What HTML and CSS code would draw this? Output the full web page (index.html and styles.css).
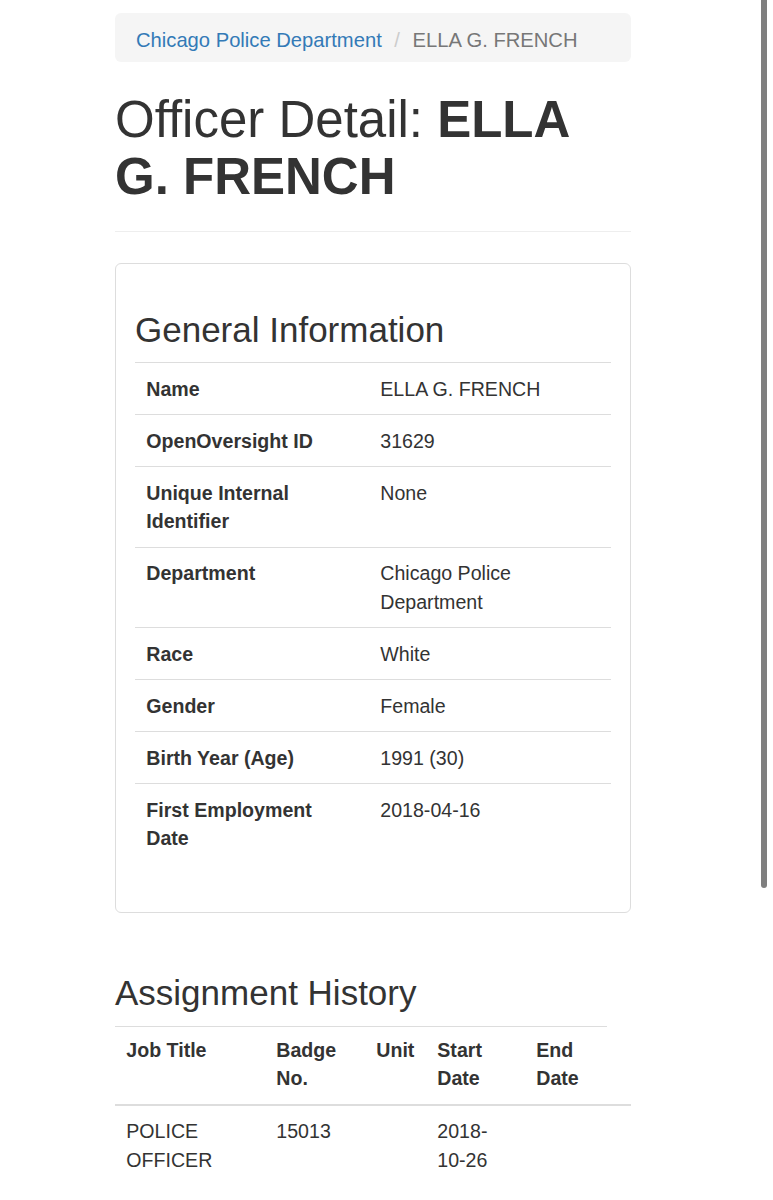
FILE: index.html
```html
<!DOCTYPE html>
<html lang="en">
<head>
<meta charset="utf-8">
<title>Officer Detail: ELLA G. FRENCH</title>
<link rel="stylesheet" href="styles.css">
</head>
<body>
<div class="container">
  <ol class="breadcrumb">
    <li><a href="#">Chicago Police Department</a></li>
    <li class="active">ELLA G. FRENCH</li>
  </ol>

  <div class="page-header">
    <h1>Officer Detail: <b>ELLA</b> <b>G. FRENCH</b></h1>
  </div>

  <div class="card">
    <h3 class="section-title">General Information</h3>
    <table class="info-table">
      <tbody>
        <tr><th>Name</th><td>ELLA G. FRENCH</td></tr>
        <tr><th>OpenOversight ID</th><td>31629</td></tr>
        <tr><th>Unique Internal Identifier</th><td>None</td></tr>
        <tr><th>Department</th><td>Chicago Police Department</td></tr>
        <tr><th>Race</th><td>White</td></tr>
        <tr><th>Gender</th><td>Female</td></tr>
        <tr><th>Birth Year (Age)</th><td>1991 (30)</td></tr>
        <tr><th>First Employment Date</th><td>2018-04-16</td></tr>
      </tbody>
    </table>
  </div>

  <h3 class="section-title history-title">Assignment History</h3>
  <div class="history-rule"></div>
  <table class="history-table">
    <thead>
      <tr>
        <th class="col-job">Job Title</th>
        <th class="col-badge">Badge No.</th>
        <th class="col-unit">Unit</th>
        <th class="col-start">Start Date</th>
        <th class="col-end">End Date</th>
      </tr>
    </thead>
    <tbody>
      <tr>
        <td>POLICE OFFICER</td>
        <td>15013</td>
        <td></td>
        <td>2018-10-26</td>
        <td></td>
      </tr>
    </tbody>
  </table>
</div>
<div class="scrollbar"></div>
</body>
</html>
```
FILE: styles.css
```css
html {
  overflow: hidden;
}

body {
  margin: 0;
  background: #fff;
  color: #333;
  font-family: "Liberation Sans", Arial, Helvetica, sans-serif;
  font-size: 19.6px;
  line-height: 28.4px;
}

.container {
  width: 516px;
  margin-left: 115px;
  padding-top: 13px;
}

/* Breadcrumb */
.breadcrumb {
  margin: 0;
  padding: 12.5px 21px 8.5px;
  list-style: none;
  background: #f5f5f5;
  border-radius: 6px;
  font-size: 20.2px;
}

.breadcrumb li {
  display: inline-block;
}

.breadcrumb li + li::before {
  content: "/\00a0";
  padding: 0 7px;
  color: #ccc;
}

.breadcrumb a {
  color: #337ab7;
  text-decoration: none;
}

.breadcrumb .active {
  color: #777;
}

/* Page header */
.page-header {
  margin-top: 28.5px;
  padding-bottom: 26px;
  border-bottom: 1px solid #eee;
}

.page-header h1 {
  margin: 0;
  font-size: 51px;
  line-height: 57px;
  font-weight: normal;
}

.page-header h1 b {
  font-weight: bold;
}

/* Card */
.card {
  margin-top: 31px;
  padding: 47px 19px 48px;
  border: 1px solid #ddd;
  border-radius: 6px;
}

.section-title {
  margin: 0 0 13px;
  font-size: 35px;
  line-height: 38.5px;
  font-weight: normal;
}

.info-table {
  width: 100%;
  border-collapse: collapse;
}

.info-table th,
.info-table td {
  padding: 11.3px;
  border-top: 1px solid #ddd;
  text-align: left;
  vertical-align: top;
}

.info-table th {
  width: 211.4px;
  font-weight: bold;
}

/* Assignment history */
.history-title {
  margin: 61px 0 13.5px;
}

.history-rule {
  width: 492px;
  border-top: 1px solid #ddd;
}

.history-table {
  width: 516px;
  table-layout: fixed;
  border-collapse: collapse;
}

.history-table th,
.history-table td {
  box-sizing: border-box;
  padding: 11.3px;
  text-align: left;
  vertical-align: top;
}

.history-table th {
  padding-top: 9.3px;
  font-weight: bold;
  border-bottom: 2px solid #ddd;
}

.history-table .col-job { width: 150px; }
.history-table .col-badge { width: 100px; }
.history-table .col-unit { width: 61px; }
.history-table .col-start { width: 99px; }
.history-table .col-end { width: 106px; }

/* Overlay scrollbar thumb */
.scrollbar {
  position: fixed;
  top: 0;
  left: 761px;
  width: 6px;
  height: 888px;
  background: #7f7f7f;
  border-radius: 0 0 3px 3px;
}
```
